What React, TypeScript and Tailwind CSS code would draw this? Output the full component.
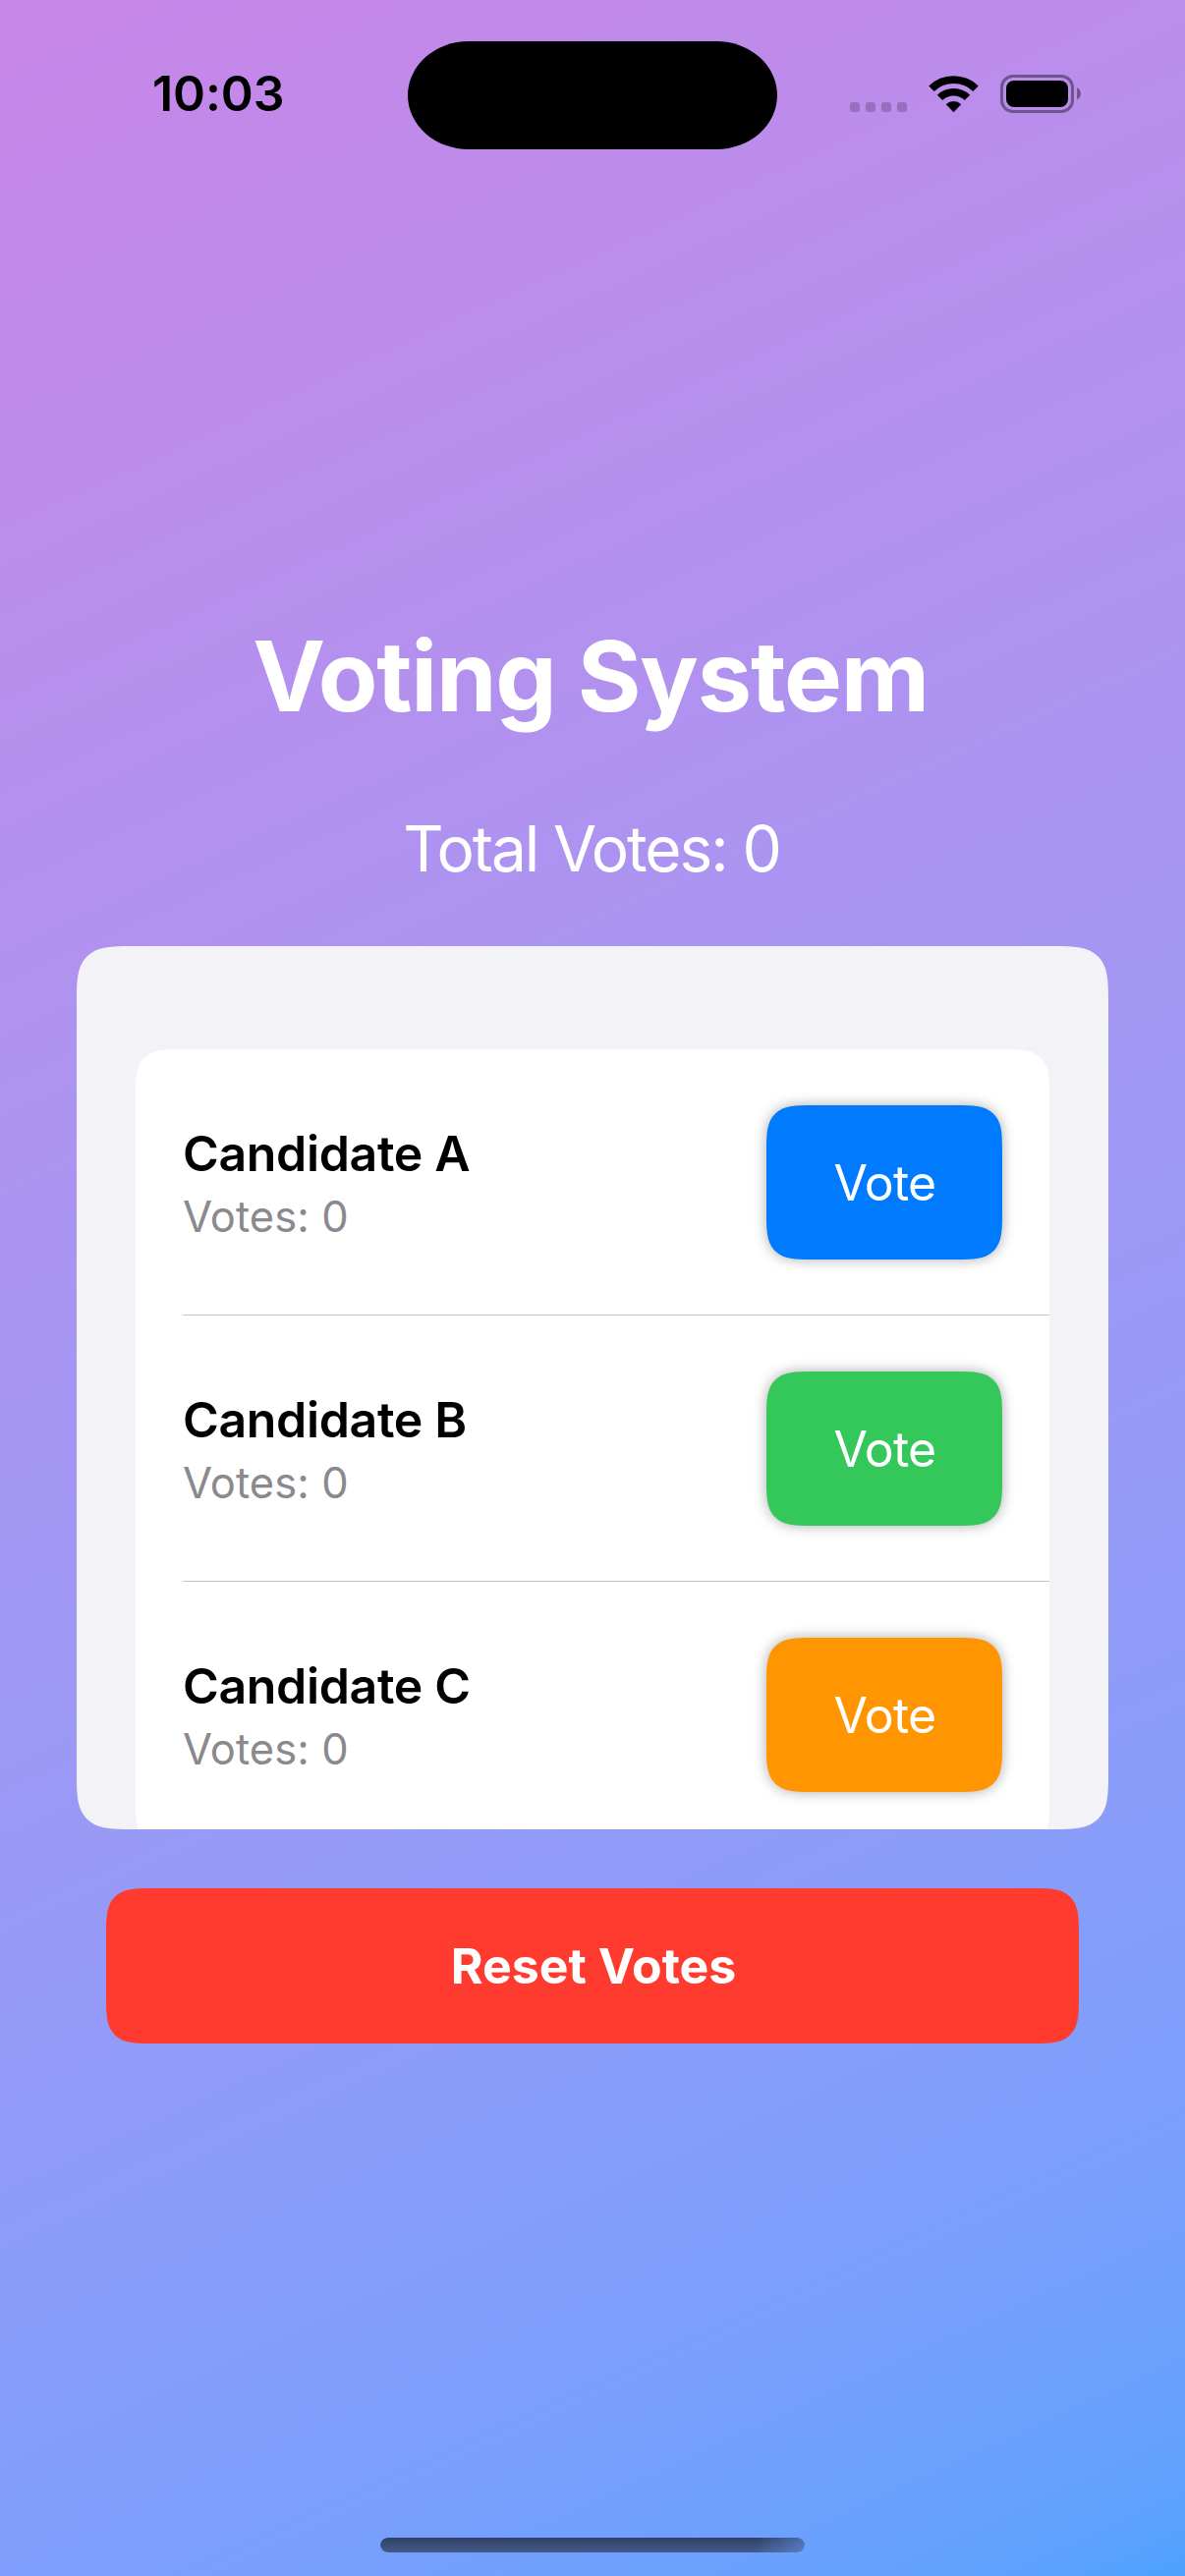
type Candidate = { name: string; votes: number; color: string };

const candidates: Candidate[] = [
  { name: 'Candidate A', votes: 0, color: 'bg-[#007aff]' },
  { name: 'Candidate B', votes: 0, color: 'bg-[#34c759]' },
  { name: 'Candidate C', votes: 0, color: 'bg-[#ff9500]' },
];

function WifiIcon() {
  return (
    <svg width="51" height="37" viewBox="0 0 50 37" preserveAspectRatio="none" className="block" fill="none">
      <path d="M2.9 13.2A31.5 31.5 0 0 1 47.1 13.2" stroke="#000" strokeWidth="7.6" />
      <path d="M11.3 22.4A19.6 19.6 0 0 1 38.7 22.4" stroke="#000" strokeWidth="7.6" />
      <path d="M17.7 29.2a10.6 10.6 0 0 1 14.6 0L25 37z" fill="#000" stroke="#000" strokeWidth="0.5" strokeLinejoin="round" />
    </svg>
  );
}

function BatteryIcon() {
  return (
    <svg width="82" height="39" viewBox="0 0 82 39" className="block" fill="none">
      <rect x="1.5" y="1.5" width="72" height="36" rx="11.5" stroke="#000" strokeOpacity="0.4" strokeWidth="3" />
      <rect x="6" y="6" width="63" height="27" rx="8" fill="#000" />
      <path d="M78 13.2c2.4 1 4 3.4 4 6.1s-1.6 5.1-4 6.1z" fill="#000" fillOpacity="0.4" />
    </svg>
  );
}

function StatusBar() {
  return (
    <header className="flex h-[191px] shrink-0 items-start">
      <div className="mt-[65px] w-[415px] pl-[155px] text-[50px] leading-[61px] font-semibold text-black">
        <span className="tracking-[-0.1px]">10:03</span>
      </div>
      <div className="mt-[42px] h-[110px] w-[376px] rounded-[62px/55px] bg-black" />
      <div className="mt-[76px] ml-[74px] flex items-start">
        <div className="mt-7 flex gap-1.5">
          {[0, 1, 2, 3].map((i) => (
            <span key={i} className="size-2.5 rounded-[3px] bg-black/20" />
          ))}
        </div>
        <div className="mt-px ml-[22px]">
          <WifiIcon />
        </div>
        <div className="ml-[22px]">
          <BatteryIcon />
        </div>
      </div>
    </header>
  );
}

function CandidateRow({ candidate, last }: { candidate: Candidate; last: boolean }) {
  return (
    <li className="h-[271px] shrink-0 pl-12">
      <div
        className={
          last
            ? 'flex h-full items-center justify-between border-b border-transparent pt-px pr-12'
            : 'flex h-full items-center justify-between border-b border-[#c6c6c8] pt-px pr-12'
        }
      >
        <div>
          <div className="text-[50px] leading-[68px] font-semibold tracking-[-0.35px] text-black">{candidate.name}</div>
          <div className="text-[43.5px] leading-[60px] tracking-[0.05px] text-[#8a8a8e]">Votes: {candidate.votes}</div>
        </div>
        <button
          className={`${candidate.color} h-[157px] w-60 rounded-[32px] pt-px pl-px text-[50px] tracking-[-0.8px] text-white shadow-[0_0_14px_rgba(0,0,0,0.33)] supports-[corner-shape:squircle]:rounded-[46px] supports-[corner-shape:squircle]:[corner-shape:superellipse(1.71)]`}
        >
          Vote
        </button>
      </div>
    </li>
  );
}

export default function App() {
  const total = candidates.reduce((sum, c) => sum + c.votes, 0);
  return (
    <div className="flex h-[2622px] w-[1206px] flex-col overflow-hidden bg-white bg-[linear-gradient(155.3deg_in_oklab,rgb(175_82_222/0.7),rgb(0_122_255/0.7))] font-[Inter,'Liberation_Sans',sans-serif]">
      <StatusBar />
      <main className="flex flex-1 flex-col items-center pt-[437px]">
        <h1 className="pr-1 text-[99px] leading-[120px] font-bold tracking-[-1.25px] text-white">Voting System</h1>
        <p className="mt-[76px] pr-0.5 text-[64px] leading-[80px] font-normal tracking-[-2.1px] text-white">
          Total Votes: {total}
        </p>
        <section className="mt-[59px] h-[899px] w-[1050px] overflow-hidden rounded-[40px] bg-[#f2f2f7] px-[60px] pt-[105px] supports-[corner-shape:squircle]:rounded-[55px] supports-[corner-shape:squircle]:[corner-shape:superellipse(1.71)]">
          <ul className="flex flex-col rounded-[32px] bg-white supports-[corner-shape:squircle]:rounded-[46px] supports-[corner-shape:squircle]:[corner-shape:superellipse(1.71)]">
            {candidates.map((c, i) => (
              <CandidateRow key={c.name} candidate={c} last={i === candidates.length - 1} />
            ))}
          </ul>
        </section>
        <button className="mt-[60px] h-[158px] w-[990px] rounded-[32px] bg-[#ff3b30] pl-[2px] text-[50px] font-bold text-white supports-[corner-shape:squircle]:rounded-[46px] supports-[corner-shape:squircle]:[corner-shape:superellipse(1.71)]">
          Reset Votes
        </button>
      </main>
      <footer className="flex justify-center pb-6">
        <div className="h-[15px] w-[432px] rounded-full bg-[linear-gradient(180deg,#2f4063,#455a8c)] [mask-image:linear-gradient(100deg,#000_88%,rgba(0,0,0,0.5))]" />
      </footer>
    </div>
  );
}
